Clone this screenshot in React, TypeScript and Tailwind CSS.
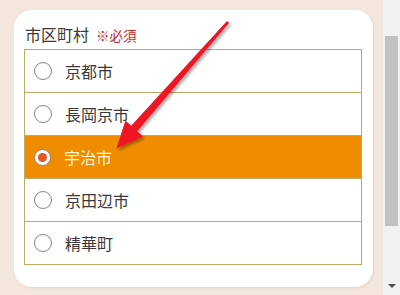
import type React from "react";

const cities = ["京都市", "長岡京市", "宇治市", "京田辺市", "精華町"];
const selected = "宇治市";

const Radio: React.FC<{ checked: boolean }> = ({ checked }) =>
	checked ? (
		<span className="w-[17px] h-[17px] rounded-full bg-white border border-[#a08060] flex items-center justify-center shrink-0">
			<span className="w-[9px] h-[9px] rounded-full bg-[#e5562a]" />
		</span>
	) : (
		<span className="w-[18px] h-[18px] rounded-full bg-white border border-[#858585] shrink-0" />
	);

export default function App() {
	return (
		<div
			className="relative w-[400px] h-[295px] overflow-hidden flex bg-[#f3e6dd]"
			style={{ fontFamily: '"Noto Sans CJK JP", "Noto Sans", sans-serif' }}
		>
			{/* Page */}
			<div className="w-[383px] pl-[14px] pt-[10px]">
				<div className="w-[359px] h-[277px] bg-white rounded-[18px] px-[10px] pt-[13px] shadow-[1px_1px_2px_rgba(180,160,140,0.25)]">
					<div className="h-[22px] mb-[4px] flex items-baseline pl-[1px]">
						<span className="text-[16px] leading-[22px] text-[#3a3a3a]">市区町村</span>
						<span className="ml-[7px] text-[13.5px] leading-[22px] text-[#c8202c]">※必須</span>
					</div>
					<div className="w-[338px] border-t border-x border-[#c2a865]">
						{cities.map((c) => {
							const on = c === selected;
							return (
								<div
									key={c}
									className={`h-[43px] border-b border-[#c2a865] flex items-center pl-[9px] gap-[13px] ${
										on ? "bg-[#ef8c00]" : "bg-white"
									}`}
								>
									<Radio checked={on} />
									<span
										className={`text-[16px] leading-none ${
											on ? "text-[#fff4d6]" : "text-[#3a3a3a]"
										}`}
									>
										{c}
									</span>
								</div>
							);
						})}
					</div>
				</div>
			</div>

			{/* Scrollbar */}
			<div className="w-[17px] h-full bg-[#f1f1f1] flex flex-col items-center">
				<div className="h-[36px]" />
				<div className="w-[13px] h-[190px] bg-[#c1c1c1]" />
				<div className="flex-1" />
				<div className="mb-[7px] w-0 h-0 border-l-[4px] border-r-[4px] border-t-[4px] border-l-transparent border-r-transparent border-t-[#505050]" />
			</div>

			{/* Arrow annotation */}
			<svg
				className="absolute left-0 top-0 pointer-events-none"
				width="400"
				height="295"
				viewBox="0 0 400 295"
			>
				<defs>
					<filter id="sh" x="-20%" y="-20%" width="140%" height="140%">
						<feDropShadow dx="2" dy="2" stdDeviation="1.5" floodColor="#000" floodOpacity="0.35" />
					</filter>
				</defs>
				<polygon
					points="229,22.9 137.2,131.2 143,136.6 116.5,148.5 125.4,120.6 131.2,125.8 227,21.1"
					fill="#ee1420"
					filter="url(#sh)"
				/>
			</svg>
		</div>
	);
}
